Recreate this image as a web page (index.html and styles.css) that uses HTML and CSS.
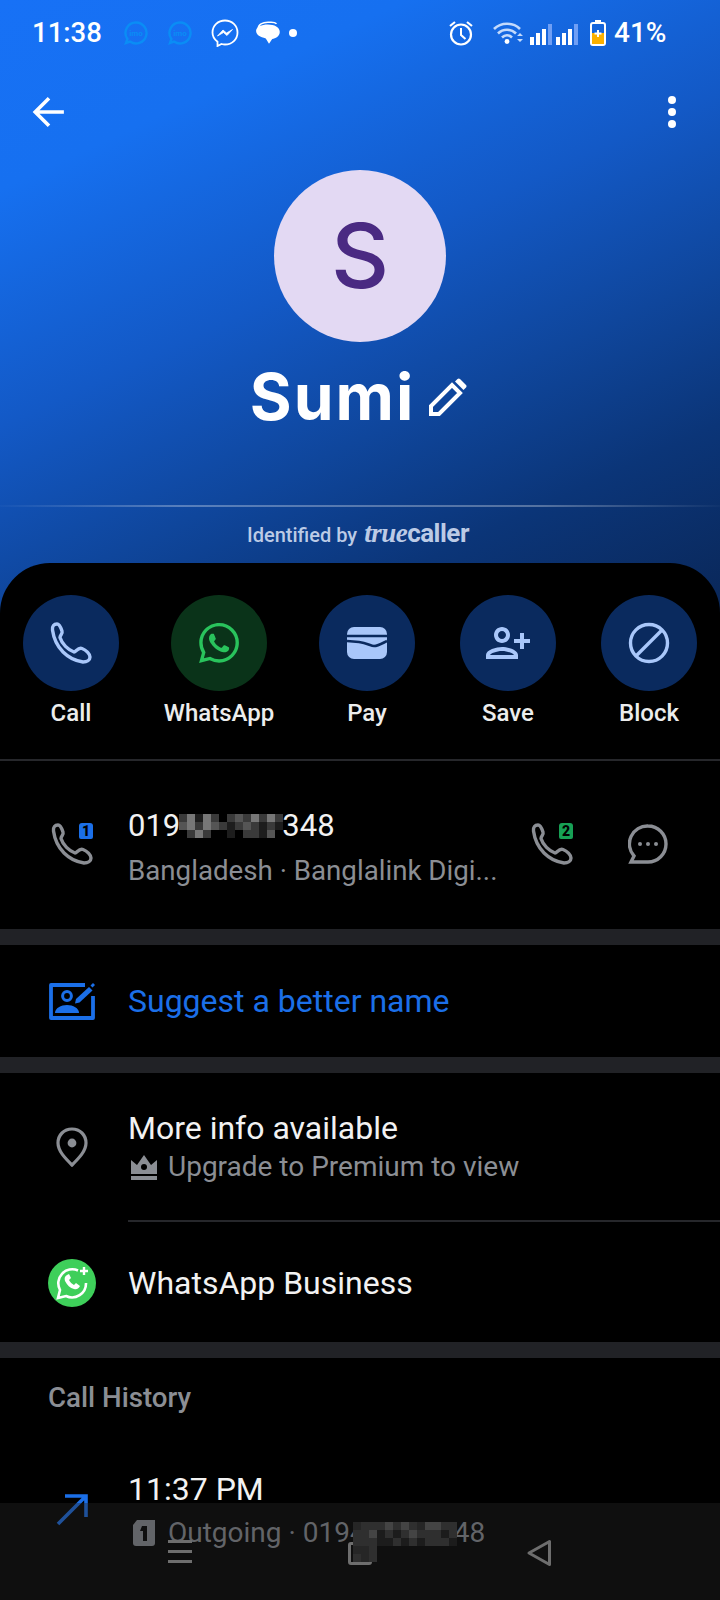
FILE: index.html
```html
<!DOCTYPE html>
<html lang="en">
<head>
    <meta charset="UTF-8">
    <title>Sumi</title>
    <link rel="stylesheet" href="styles.css">
</head>
<body>
<div class="page">
    <div class="hero">
        <div class="status">
            <span class="clock">11:38</span>
            <svg class="st imo" viewBox="0 0 24 24"><path d="M12 1.500a10.500 10.500 0 1 1-6 19.100L2 22l1.400-4A10.500 10.500 0 0 1 12 1.500z" fill="none" stroke="#0a8df5" stroke-width="2.400"/><text x="12" y="15" text-anchor="middle" class="imo-text">imo</text></svg>
            <svg class="st imo2" viewBox="0 0 24 24"><path d="M12 1.500a10.500 10.500 0 1 1-6 19.100L2 22l1.400-4A10.500 10.500 0 0 1 12 1.500z" fill="none" stroke="#0a8df5" stroke-width="2.400"/><text x="12" y="15" text-anchor="middle" class="imo-text">imo</text></svg>
            <svg class="st msg" viewBox="0 0 28 28"><path d="M14 1.500c7 0 12.500 5.200 12.500 12S21 25.500 14 25.500c-1.200 0-2.400-.2-3.500-.5L6.500 27v-4.300C3.300 20.400 1.500 17.200 1.500 13.500 1.500 6.700 7 1.500 14 1.500z" fill="none" stroke="#fff" stroke-width="1.800"/><path d="M6.500 17l5.500-6 3.500 3 6-3.500-5.500 6-3.500-3z" fill="#fff" stroke="#fff" stroke-width=".8"/></svg>
            <svg class="st bubbles" viewBox="0 0 26 26"><path d="M3 9c0-4 4-6 9-6h3c2 0 4 .4 5 1.500" fill="none" stroke="#fff" stroke-width="1.400"/><path d="M12 5c6 0 11 2.500 11 7 0 4-4 6-7 6.500L13 23l-3-5C5 17 1 15 1 11c0-4 5-6 11-6z" fill="#fff"/></svg>
            <span class="dot"></span>
            <span class="spacer"></span>
            <svg class="st alarm" viewBox="0 0 24 26"><circle cx="12" cy="14.500" r="10" fill="none" stroke="#fff" stroke-width="2.200"/><path d="M12 8v7l4.500 4" fill="none" stroke="#fff" stroke-width="2"/><path d="M1 6l5-4M23 6l-5-4" stroke="#fff" stroke-width="2.200"/></svg>
            <svg class="st wifi" viewBox="0 0 30 24"><path d="M1 8c7-7 19-7 26 0M5 12.500c5-5 13-5 18 0M9 16.500c3-3 7-3 10 0" fill="none" stroke="#c3dafc" stroke-width="2.600"/><circle cx="14" cy="20.500" r="2.400" fill="#fff"/><path d="M24 15l3-3 3 3zM24 18l3 3 3-3z" fill="#c3dafc"/></svg>
            <svg class="st signal" viewBox="0 0 22 21"><path d="M0 13h4v8H0zM6 9h4v12H6zM12 5h4v16h-4z" fill="#fff"/><path d="M18 0h4v21h-4z" fill="#6f9ff5"/></svg>
            <svg class="st signal2" viewBox="0 0 22 21"><path d="M0 13h4v8H0zM6 9h4v12H6zM12 5h4v16h-4z" fill="#fff"/><path d="M18 0h4v21h-4z" fill="#6f9ff5"/></svg>
            <svg class="st battery" viewBox="0 0 16 26"><path d="M5 0h6v3H5z" fill="#fff"/><rect x="1" y="3" width="14" height="22" rx="2" fill="none" stroke="#fff" stroke-width="2"/><path d="M2 13h12v11H2z" fill="#fbb000"/><path d="M7 10h2v2.500h2.500v2H9V17H7v-2.500H4.500v-2H7z" fill="#fff"/></svg>
            <span class="percent">41%</span>
        </div>
        <div class="toolbar">
            <svg class="back" viewBox="0 0 32 32"><path d="M30 16H3M16 3L3 16l13 13" fill="none" stroke="#fff" stroke-width="3.400"/></svg>
            <svg class="kebab" viewBox="0 0 10 32"><circle cx="5" cy="4" r="4" fill="#fff"/><circle cx="5" cy="16" r="4" fill="#fff"/><circle cx="5" cy="28" r="4" fill="#fff"/></svg>
        </div>
        <div class="avatar">S</div>
        <div class="name-row">
            <span class="name">Sumi</span>
            <svg class="pencil" viewBox="0 0 38 38"><path d="M2 36v-8L23 7l8 8-21 21z" fill="none" stroke="#fff" stroke-width="4"/><path d="M26 3.500L28.500 1c.8-.7 1.700-.7 2.500 0l6 6c.7.8.7 1.700 0 2.500L34.500 12z" fill="#fff"/></svg>
        </div>
        <div class="hero-line"></div>
        <div class="identified">Identified by <span class="tc"><i>true</i>caller</span></div>
    </div>

    <div class="sheet">
        <div class="actions">
            <div class="action a-call">
                <span class="circle">
                    <svg width="42" height="42" viewBox="0 0 42 42"><path class="ph" d="M7 2C4 2 2 4 2.500 8 5 26 18 38 33 40c4 0 7-2 7-5 0-3-4-7-8-8.500-4-1.500-6 3.500-8 3.500-6-2-12-8-14-14.500 0-2.500 3-3.500 2-6.500C11 6 9 2 7 2z" stroke="#a9c7fa"/></svg>
                </span>
                <span class="label">Call</span>
            </div>
            <div class="action a-wa">
                <span class="circle green">
                    <svg width="40" height="40" viewBox="0 0 24 24"><path fill="#29c35c" d="M17.472 14.382c-.297-.149-1.758-.867-2.030-.967-.273-.099-.471-.148-.670.150-.197.297-.767.966-.940 1.164-.173.199-.347.223-.644.075-.297-.150-1.255-.463-2.390-1.475-.883-.788-1.480-1.761-1.653-2.059-.173-.297-.018-.458.130-.606.134-.133.298-.347.446-.520.149-.174.198-.298.298-.497.099-.198.050-.371-.025-.520-.075-.149-.669-1.612-.916-2.207-.242-.579-.487-.500-.669-.510-.173-.008-.371-.010-.570-.010-.198 0-.520.074-.792.372-.272.297-1.040 1.016-1.040 2.479 0 1.462 1.065 2.875 1.213 3.074.149.198 2.096 3.200 5.077 4.487.709.306 1.262.489 1.694.625.712.227 1.360.195 1.871.118.571-.085 1.758-.719 2.006-1.413.248-.694.248-1.289.173-1.413-.074-.124-.272-.198-.570-.347m-5.421 7.403h-.004a9.870 9.870 0 01-5.031-1.378l-.361-.214-3.741.982.998-3.648-.235-.374a9.860 9.860 0 01-1.510-5.260c.001-5.450 4.436-9.884 9.888-9.884 2.640 0 5.122 1.030 6.988 2.898a9.825 9.825 0 012.893 6.994c-.003 5.450-4.437 9.884-9.885 9.884m8.413-18.297A11.815 11.815 0 0012.050 0C5.495 0 .160 5.335.157 11.892c0 2.096.547 4.142 1.588 5.945L.057 24l6.305-1.654a11.882 11.882 0 005.683 1.448h.005c6.554 0 11.890-5.335 11.893-11.893a11.821 11.821 0 00-3.480-8.413z"/></svg>
                </span>
                <span class="label">WhatsApp</span>
            </div>
            <div class="action a-pay">
                <span class="circle">
                    <svg width="40" height="32" viewBox="0 0 40 32"><rect width="40" height="32" rx="7" fill="#a9c7fa"/><path d="M0 9h40M0 14l12 1c8 1 12 4 15 4 4 0 7-2 13-5" fill="none" stroke="#0a2a5e" stroke-width="2.600"/></svg>
                </span>
                <span class="label">Pay</span>
            </div>
            <div class="action a-save">
                <span class="circle">
                    <svg class="flip" width="48" height="48" viewBox="0 0 24 24"><path fill="#a9c7fa" d="M15 12c2.210 0 4-1.790 4-4s-1.790-4-4-4-4 1.790-4 4 1.790 4 4 4zm0-6c1.100 0 2 .900 2 2s-.900 2-2 2-2-.900-2-2 .900-2 2-2zm0 8c-2.670 0-8 1.340-8 4v2h16v-2c0-2.660-5.330-4-8-4zm-6 4c.220-.720 3.310-2 6-2 2.700 0 5.800 1.290 6 2H9zm-3-3v-3h3v-2H6V7H4v3H1v2h3v3h2z"/></svg>
                </span>
                <span class="label">Save</span>
            </div>
            <div class="action a-block">
                <span class="circle">
                    <svg width="42" height="42" viewBox="0 0 42 42"><circle cx="21" cy="21" r="18.500" fill="none" stroke="#a9c7fa" stroke-width="3.400"/><path d="M8 34L34 8" stroke="#a9c7fa" stroke-width="3.400"/></svg>
                </span>
                <span class="label">Block</span>
            </div>
        </div>

        <div class="row row-phone">
            <span class="ico ico-sim">
                <svg width="42" height="42" viewBox="0 0 42 42"><path class="ph" d="M7 2C4 2 2 4 2.500 8 5 26 18 38 33 40c4 0 7-2 7-5 0-3-4-7-8-8.500-4-1.500-6 3.500-8 3.500-6-2-12-8-14-14.500 0-2.500 3-3.500 2-6.500C11 6 9 2 7 2z" stroke="#8b8e94"/></svg>
                <span class="sim sim-blue">1</span>
            </span>
            <div class="texts">
                <div class="title number">019<svg class="pix" width="104" height="24" viewBox="0 0 13 3"><path fill="#3a3a3a" d="M0 0h13v3H0z"/><path fill="#777" d="M1 0h1v2H1zM3 0h1v2H3zM9 0h1v1H9zM11 0h1v1h-1zM2 2h1v1H2z"/><path fill="#1d1d1d" d="M2 0h1v1H2zM6 1h1v2H6zM10 1h1v2h-1zM12 1h1v1h-1z"/><path fill="#555" d="M7 0h1v1H7zM8 1h1v1H8zM4 1h1v1H4zM11 2h1v1h-1zM0 1h1v1H0z"/><path fill="#000" d="M0 2h1v1H0zM4 2h2v1H4zM5 0h1v1H5zM7 2h1v1H7zM12 2h1v1h-1z"/></svg>348</div>
                <div class="sub">Bangladesh · Banglalink Digi...</div>
            </div>
            <span class="ico ico-sim2">
                <svg width="42" height="42" viewBox="0 0 42 42"><path class="ph" d="M7 2C4 2 2 4 2.500 8 5 26 18 38 33 40c4 0 7-2 7-5 0-3-4-7-8-8.500-4-1.500-6 3.500-8 3.500-6-2-12-8-14-14.500 0-2.500 3-3.500 2-6.500C11 6 9 2 7 2z" stroke="#8b8e94"/></svg>
                <span class="sim sim-green">2</span>
            </span>
            <span class="ico ico-chat">
                <svg width="40" height="40" viewBox="0 0 40 40"><path d="M20 2a18 18 0 1 1 0 36H3l3-6A18 18 0 0 1 20 2z" fill="none" stroke="#8b8e94" stroke-width="3.400"/><circle cx="12" cy="20" r="2" fill="#8b8e94"/><circle cx="20" cy="20" r="2" fill="#8b8e94"/><circle cx="28" cy="20" r="2" fill="#8b8e94"/></svg>
            </span>
        </div>

        <div class="band"></div>

        <div class="row row-suggest">
            <span class="ico">
                <svg width="46" height="38" viewBox="0 0 46 38"><path d="M36 3H2v33h42V14" fill="none" stroke="#1b6fe8" stroke-width="3.800" stroke-linejoin="round"/><circle cx="18" cy="14" r="4.400" fill="none" stroke="#1b6fe8" stroke-width="3"/><path d="M6 31c0-5 6-8 12-8s12 3 12 8z" fill="#1b6fe8"/><path d="M27 17L40 5l3.500 3.500-13 12-4.500 1z" fill="#1b6fe8"/><path d="M41.500 3.500L44 1l2 2-2.500 2.500z" fill="#1b6fe8"/></svg>
            </span>
            <div class="title suggest">Suggest a better name</div>
        </div>

        <div class="band"></div>

        <div class="row row-info">
            <span class="ico">
                <svg width="32" height="40" viewBox="0 0 32 40"><path d="M16 2C8 2 2 8 2 16c0 8 7 15 14 22 7-7 14-14 14-22 0-8-6-14-14-14z" fill="none" stroke="#8b8e94" stroke-width="3.200"/><circle cx="16" cy="16" r="4.400" fill="#8b8e94"/></svg>
            </span>
            <div class="texts">
                <div class="title">More info available</div>
                <div class="sub premium">
                    <svg width="26" height="26" viewBox="0 0 26 26"><path d="M0 6l6 5 7-10 7 10 6-5v14H0z" fill="#8b8e94"/><circle cx="13" cy="13" r="3" fill="#000"/><path d="M0 22h26v4H0z" fill="#8b8e94"/></svg>
                    <span>Upgrade to Premium to view</span>
                </div>
            </div>
        </div>
        <div class="inset-line"></div>
        <div class="row row-wab">
            <span class="ico">
                <svg width="48" height="48" viewBox="0 0 48 48"><circle cx="24" cy="24" r="24" fill="#3ecf5a"/><path d="M30 11.500A14 14 0 0 0 12 31l-2 8 8-2a14 14 0 0 0 20-13" fill="none" stroke="#fff" stroke-width="2.600"/><path d="M19 16c-2 1-3 3-2 6 2 4 5 7 9 8 3 1 5-1 6-3l-4-3-2 2c-2-1-4-3-5-5l2-2-2-4z" fill="#fff"/><path d="M36 8v8M32 12h8" stroke="#fff" stroke-width="2.400"/></svg>
            </span>
            <div class="title">WhatsApp Business</div>
        </div>

        <div class="band"></div>

        <div class="history-head">Call History</div>
        <div class="row row-call">
            <span class="ico">
                <svg width="34" height="34" viewBox="0 0 34 34"><path d="M3 32L31 4M10 4h21v21" fill="none" stroke="#1b6fe8" stroke-width="3.600"/></svg>
            </span>
            <div class="texts">
                <div class="title">11:37 PM</div>
                <div class="sub outgoing">
                    <svg width="22" height="26" viewBox="0 0 22 26"><path d="M4 0h18v23a3 3 0 0 1-3 3H3a3 3 0 0 1-3-3V5z" fill="#8b8e94"/><path d="M9 6h5v15h-4V11H7z" fill="#000"/></svg>
                    <span class="out-text">Outgoing · 0194</span>
                    <span class="out-gap"></span>
                    <span>48</span>
                </div>
            </div>
        </div>
    </div>

    <div class="navbar">
        <div class="nav-menu"><span></span><span></span><span></span></div>
        <div class="nav-home"></div>
        <svg class="nav-back" width="26" height="28" viewBox="0 0 26 28"><path d="M23.500 2.500v23L3 14z" fill="none" stroke="#6e6e6e" stroke-width="3" stroke-linejoin="round"/></svg>
        <svg class="nav-pix" width="104" height="40" viewBox="0 0 13 5"><path fill="#2f2f2f" d="M0 0h13v3H0zM0 3h3v2H0z"/><path fill="#444" d="M4 0h1v1H4zM2 1h1v1H2zM7 1h1v1H7zM9 0h2v1H9zM6 0h1v1H6z"/><path fill="#1c1c1c" d="M3 2h2v1H3zM6 2h1v1H6zM8 2h1v1H8zM3 1h1v1H3zM5 1h1v1H5zM11 1h1v1h-1zM12 2h1v1h-1z"/><path fill="#262626" d="M0 3h2v1H0zM1 4h1v1H1zM0 0h1v1H0zM8 0h1v1H8z"/></svg>
    </div>
</div>
</body>
</html>
```

FILE: styles.css
```css
*{
    margin: 0;
    padding: 0;
    box-sizing: border-box;
}
body{
    background-color: black;
    font-family: Roboto, "Liberation Sans", sans-serif;
}
.page{
    position: relative;
    width: 720px;
    height: 1600px;
    overflow: hidden;
    background-color: black;
}

/* top part */
.hero{
    height: 613px;
    background: linear-gradient(155deg, #1771f6 0%, #1670f0 20%, #1359c6 45%, #0f469c 64%, #0b3578 80%, #0a2758 100%);
}
.status{
    display: flex;
    align-items: center;
    height: 65px;
    padding-left: 32px;
    color: white;
}
.clock{
    font-size: 27.500px;
    font-weight: 500;
    width: 92px;
}
.st{
    display: block;
    flex: none;
}
.imo{ width: 24px; height: 24px; }
.imo2{ width: 24px; height: 24px; margin-left: 20px; }
.msg{ width: 28px; height: 28px; margin-left: 19px; }
.bubbles{ width: 28px; height: 28px; margin-left: 16px; }
.imo-text{
    font-family: Roboto, sans-serif;
    font-size: 8px;
    font-weight: 700;
    fill: #0a8df5;
}
.dot{
    width: 8px;
    height: 8px;
    margin-left: 6px;
    border-radius: 50%;
    background-color: white;
}
.spacer{ flex: 1; }
.alarm{ width: 24px; height: 26px; }
.wifi{ width: 30px; height: 24px; margin-left: 20px; }
.signal{ width: 22px; height: 21px; margin-left: 7px; margin-top: 3px; }
.signal2{ width: 22px; height: 21px; margin-left: 4px; margin-top: 3px; }
.battery{ width: 16px; height: 26px; margin-left: 12px; }
.percent{
    font-size: 28px;
    font-weight: 500;
    width: 53px;
    margin-left: 8px;
    margin-right: 53px;
}
.toolbar{
    display: flex;
    justify-content: space-between;
    align-items: center;
    height: 32px;
    margin-top: 31px;
    padding: 0 43px 0 32px;
}
.back{ width: 34px; height: 34px; }
.kebab{ width: 10px; height: 32px; }
.avatar{
    width: 172px;
    height: 172px;
    margin: 42px auto 0;
    border-radius: 50%;
    background-color: #e3d9f3;
    color: #4a2a82;
    font-family: Inter, Roboto, sans-serif;
    font-size: 90px;
    font-weight: 550;
    line-height: 172px;
    text-align: center;
}
.name-row{
    display: flex;
    justify-content: center;
    align-items: center;
    gap: 14px;
    height: 72px;
    margin-top: 18px;
    padding-right: 3px;
    color: white;
}
.name{
    font-family: Inter, Roboto, sans-serif;
    font-size: 64px;
    font-weight: 700;
    letter-spacing: 2px;
}
.pencil{ width: 38px; height: 38px; margin-top: 2px; }
.hero-line{
    height: 2px;
    margin-top: 73px;
    background: linear-gradient(90deg, rgba(255,255,255,.02), rgba(255,255,255,.3) 25%, rgba(255,255,255,.3) 75%, rgba(255,255,255,.02));
}
.identified{
    margin-top: 13px;
    padding-right: 4px;
    color: #bccbe6;
    font-size: 20px;
    font-weight: 500;
    line-height: 26px;
    text-align: center;
}
.tc{
    font-size: 26px;
    font-weight: 700;
    letter-spacing: -.5px;
    margin-left: 2px;
}
.tc i{
    font-family: "Liberation Serif", serif;
    font-size: 27px;
}

/* black sheet */
.sheet{
    margin-top: -50px;
    height: 1037px;
    border-radius: 50px 50px 0 0;
    background-color: black;
}
.actions{
    display: flex;
    height: 198px;
    padding-top: 32px;
    border-bottom: 2px solid #26272b;
}
.action{
    display: flex;
    flex-direction: column;
    align-items: center;
    width: 110px;
}
.a-call{ margin-left: 16px; width: 110px; }
.a-wa{ margin-left: 38px; }
.a-pay{ margin-left: 45px; width: 96px; }
.a-save{ margin-left: 45px; width: 96px; }
.a-block{ margin-left: 45px; width: 96px; }
.circle{
    display: flex;
    justify-content: center;
    align-items: center;
    width: 96px;
    height: 96px;
    border-radius: 50%;
    background-color: #0a2a5e;
}
.green{ background-color: #0a3319; }
.flip{ transform: scaleX(-1); }
.label{
    margin-top: 7px;
    color: #eceded;
    font-size: 24px;
    font-weight: 500;
    line-height: 30px;
    white-space: nowrap;
}
.ph{
    fill: none;
    stroke-width: 3.400;
    stroke-linejoin: round;
}
.row{
    display: flex;
    align-items: center;
}
.ico{
    position: relative;
    display: flex;
    justify-content: center;
    align-items: center;
    flex: none;
    width: 48px;
    height: 48px;
    margin-left: 48px;
    margin-right: 32px;
}
.texts{ flex: 1; }
.title{
    color: #f2f2f2;
    font-size: 32px;
    line-height: 38px;
}
.sub{
    color: #8b8e94;
    font-size: 28px;
    line-height: 38px;
}
.suggest{ color: #1b6fe8; }
.row-phone{ height: 168px; }
.number{
    display: flex;
    align-items: center;
    font-size: 31px;
}
.pix{ margin: 0 -1px; }
.row-phone .texts{ margin-top: 6px; }
.row-phone .sub{ margin-top: 7px; font-size: 27.700px; }
.ico-sim{ margin-top: -2px; }
.ico-sim2{ margin: -2px 0 0 0; }
.ico-chat{ margin: -2px 48px 0 48px; }
.sim{
    position: absolute;
    top: 3px;
    right: 3px;
    width: 14px;
    height: 16px;
    border-radius: 3px 3px 2px 2px;
    color: black;
    font-size: 14px;
    font-weight: 900;
    line-height: 16px;
    text-align: center;
}
.sim-blue{ background-color: #1b6fe8; }
.sim-green{ background-color: #17a055; }
.band{
    height: 16px;
    background-color: #212226;
}
.row-suggest{ height: 112px; }
.row-info{ height: 147px; }
.row-info .texts{ margin-top: 1px; }
.premium{
    display: flex;
    align-items: center;
    gap: 11px;
    margin-top: 1px;
    padding-left: 3px;
}
.inset-line{
    height: 2px;
    margin-left: 128px;
    background-color: #26272b;
}
.row-wab{ height: 120px; padding-top: 2px; }
.history-head{
    height: 50px;
    margin-top: 15px;
    padding-left: 48px;
    color: #8b8e94;
    font-size: 27.700px;
    font-weight: 500;
    line-height: 50px;
}
.row-call{
    height: 96px;
    margin-top: 47px;
    align-items: flex-start;
}
.row-call .ico{ margin-top: 15px; }
.outgoing{
    display: flex;
    align-items: center;
    margin-top: 6px;
    padding-left: 5px;
}
.out-text{ margin-left: 13px; }
.out-gap{ width: 88px; }

/* bottom navigation lying over the list */
.navbar{
    position: absolute;
    left: 0;
    right: 0;
    bottom: 0;
    height: 97px;
    background-color: rgba(38,38,38,.4);
}
.nav-menu{
    position: absolute;
    left: 168px;
    top: 37px;
    display: flex;
    flex-direction: column;
    gap: 7px;
    width: 24px;
}
.nav-menu span{
    height: 3px;
    background-color: #6e6e6e;
}
.nav-home{
    position: absolute;
    left: 348px;
    top: 39px;
    width: 24px;
    height: 23px;
    border: 3px solid #6e6e6e;
    border-radius: 3px;
}
.nav-back{
    position: absolute;
    left: 526px;
    top: 36px;
}
.nav-pix{
    position: absolute;
    left: 353px;
    top: 19px;
}
```
